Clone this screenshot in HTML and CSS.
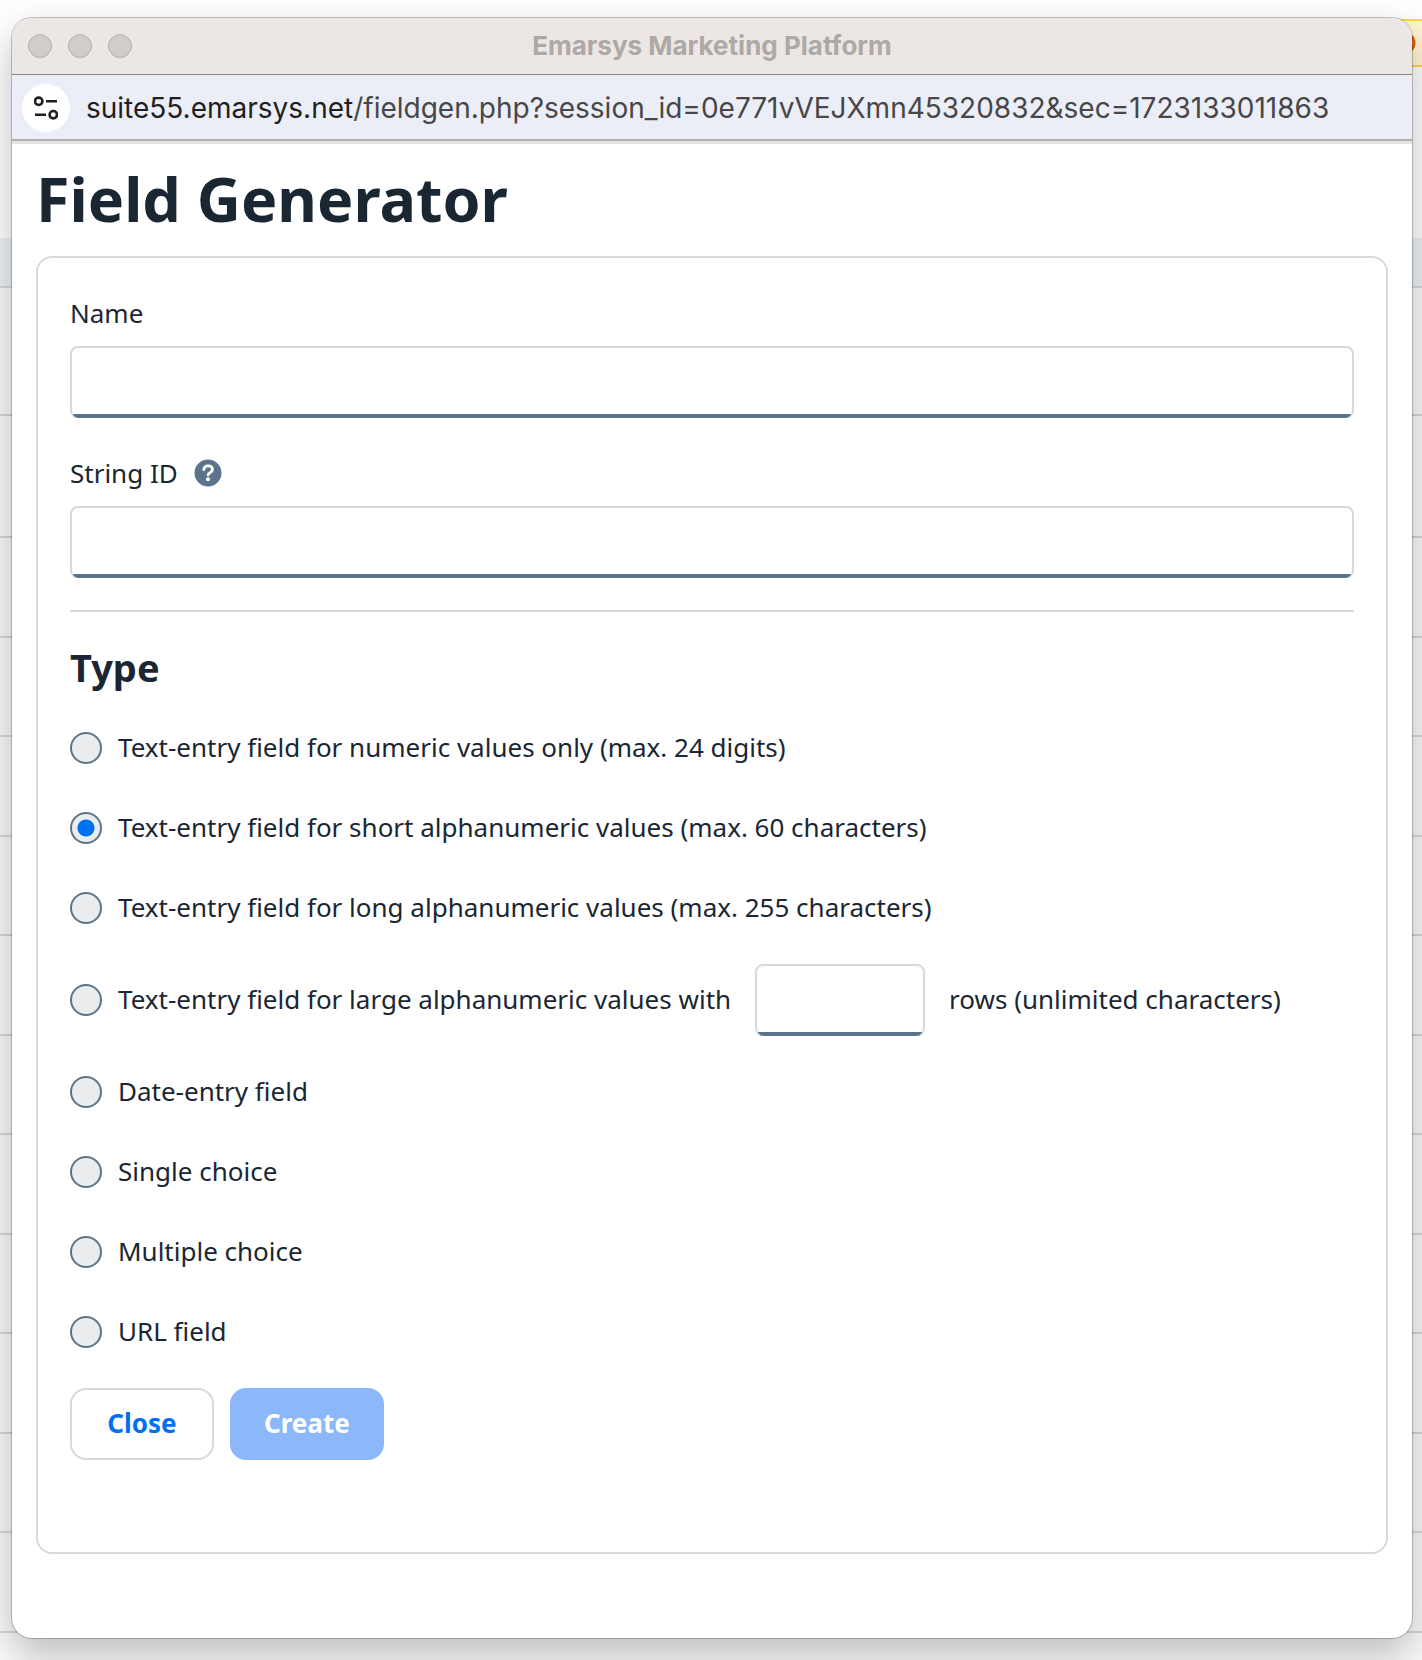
FILE: index.html
```html
<!DOCTYPE html>
<html lang="en">
<head>
<meta charset="utf-8">
<title>Emarsys Marketing Platform</title>
<link rel="stylesheet" href="styles.css">
</head>
<body>
<div class="desktop">
  <div class="opener" aria-hidden="true">
    <div class="opener-top"><div class="notice"><svg class="notice-icon" viewBox="0 0 24 24"><circle cx="12" cy="12" r="10" fill="none" stroke="#e06000" stroke-width="3"/></svg></div></div>
    <div class="opener-head"></div>
    <div class="opener-row first"></div>
    <div class="opener-row second"></div>
    <div class="opener-row"></div>
    <div class="opener-row"></div>
    <div class="opener-row"></div>
    <div class="opener-row"></div>
    <div class="opener-row"></div>
    <div class="opener-row"></div>
    <div class="opener-row"></div>
    <div class="opener-row"></div>
    <div class="opener-row"></div>
    <div class="opener-row"></div>
    <div class="opener-row"></div>
  </div>

  <div class="window">
    <header class="titlebar">
      <div class="lights"><span class="light"></span><span class="light"></span><span class="light"></span></div>
      <div class="window-title">Emarsys Marketing Platform</div>
    </header>
    <div class="urlbar">
      <button class="site-info" type="button" aria-label="View site information">
        <svg viewBox="0 0 24 24" width="24" height="24" fill="none" stroke="#1f1f1f" stroke-width="2.600"><circle cx="4.700" cy="5.300" r="3.700"/><path d="M12 5.300h11M1 18.700h11"/><circle cx="19.300" cy="18.700" r="3.700"/></svg>
      </button>
      <div class="url"><span class="host">suite55.emarsys.net</span>/fieldgen.php?session_id=0e771vVEJXmn45320832&amp;sec=1723133011863</div>
    </div>

    <main class="content">
      <h1 class="page-title">Field Generator</h1>
      <form class="card">
        <div class="field">
          <label class="label" for="name">Name</label>
          <input class="input" id="name" type="text">
        </div>
        <div class="field">
          <div class="label-row">
            <label class="label" for="string-id">String ID</label>
            <button class="help" type="button" aria-label="Help">
              <svg viewBox="0 0 28 28" width="28" height="28"><circle cx="14" cy="14" r="13.500" fill="#5b738b"/><path d="M9.800 10.600c.3-2.300 1.900-3.700 4.300-3.700 2.500 0 4.300 1.400 4.300 3.500 0 1.500-.8 2.300-2.100 3.100-1.400.8-2.200 1.300-2.200 2.500" fill="none" stroke="#fff" stroke-width="2.800" stroke-linecap="round"/><circle cx="14" cy="20.300" r="2" fill="#fff"/></svg>
            </button>
          </div>
          <input class="input" id="string-id" type="text">
        </div>
        <hr class="divider">
        <h2 class="section-title">Type</h2>
        <div class="options">
          <label class="option"><input class="radio" type="radio" name="type"><span class="option-text">Text-entry field for numeric values only (max. 24 digits)</span></label>
          <label class="option"><input class="radio" type="radio" name="type" checked><span class="option-text">Text-entry field for short alphanumeric values (max. 60 characters)</span></label>
          <label class="option"><input class="radio" type="radio" name="type"><span class="option-text">Text-entry field for long alphanumeric values (max. 255 characters)</span></label>
          <div class="option with-rows">
            <label class="option-main"><input class="radio" type="radio" name="type"><span class="option-text">Text-entry field for large alphanumeric values with</span></label>
            <input class="input rows" id="rows" type="text" aria-label="Number of rows">
            <label class="option-text" for="rows">rows (unlimited characters)</label>
          </div>
          <label class="option"><input class="radio" type="radio" name="type"><span class="option-text">Date-entry field</span></label>
          <label class="option"><input class="radio" type="radio" name="type"><span class="option-text">Single choice</span></label>
          <label class="option"><input class="radio" type="radio" name="type"><span class="option-text">Multiple choice</span></label>
          <label class="option"><input class="radio" type="radio" name="type"><span class="option-text">URL field</span></label>
        </div>
        <div class="actions">
          <button class="button secondary" type="button">Close</button>
          <button class="button primary" type="submit" disabled>Create</button>
        </div>
      </form>
    </main>
  </div>
</div>
</body>
</html>
```
FILE: styles.css
```css
* { box-sizing: border-box; }

body {
  margin: 0;
  background: #fff;
  color: #1a2733;
  font: 26px/30px "Noto Sans", sans-serif;
}

.desktop {
  display: grid;
  min-height: 100vh;
  overflow: hidden;
}

.opener, .window { grid-area: 1 / 1; min-width: 0; }

/* Page behind the popup window */
.opener { background: #fafafa; }
.opener-top { height: 238px; padding-top: 19px; background: #fff; }
.notice {
  display: flex;
  align-items: center;
  justify-content: flex-end;
  height: 48px;
  margin-left: 50%;
  padding-right: 6px;
  border: solid #ffd54a;
  border-width: 2px 0;
  background: #fff7d0;
}
.notice-icon { width: 24px; height: 24px; }
.opener-head { height: 50px; background: #eef2f6; border-bottom: 2px solid #d5dadd; }
.opener-row { height: 100px; border-bottom: 2px solid #d5dadd; }
.opener-row:nth-child(even) { height: 99px; }
.opener-row.first { height: 128px; }
.opener-row.second { height: 122px; }

/* Popup window */
.window {
  display: flex;
  flex-direction: column;
  margin: 18px 10px 22px 12px;
  border-radius: 20px;
  background: #fff;
  box-shadow: 0 0 0 1px rgba(0, 0, 0, .22), 0 16px 40px rgba(0, 0, 0, .26);
  overflow: hidden;
}

.titlebar {
  display: grid;
  grid-template-columns: 1fr auto 1fr;
  align-items: center;
  height: 57px;
  padding: 0 16px;
  border-bottom: 1px solid #8a8786;
  background: #ece7e4;
}
.lights { display: flex; gap: 16px; }
.light { width: 24px; height: 24px; border: 1px solid #b5b0ae; border-radius: 50%; background: #d2cdcb; }
.window-title { color: #aea9a6; font: 700 26px/32px Inter, sans-serif; }

.urlbar {
  display: flex;
  align-items: center;
  gap: 16px;
  height: 66px;
  padding: 2px 10px 0;
  border-bottom: 2px solid #b0b0b8;
  background: #ebeef7;
}
.site-info {
  display: grid;
  place-items: center;
  flex: none;
  width: 48px;
  height: 48px;
  padding: 0;
  border: 0;
  border-radius: 50%;
  background: #fff;
}
.url { color: #474747; font: 28px/32px Inter, sans-serif; white-space: nowrap; }
.host { color: #1f1f1f; }

.content { flex: 1; padding: 24px; border-top: 3px solid #e4e4e4; }
.page-title { margin: 0 0 26px; font-size: 61px; line-height: 62px; font-weight: 700; }

.card {
  min-height: 1298px;
  padding: 40px 32px;
  border: 2px solid #d5dadd;
  border-radius: 16px;
}
.field { margin-bottom: 40px; }
.label-row { display: flex; align-items: center; gap: 16px; }
.label { display: block; }
.help { display: flex; padding: 0; border: 0; background: none; }
.input {
  display: block;
  width: 100%;
  height: 72px;
  margin-top: 18px;
  padding: 0 16px;
  border: 2px solid #d5dadd;
  border-bottom: 0;
  border-radius: 8px;
  background: #fff linear-gradient(#5b738b, #5b738b) bottom / 100% 4px no-repeat;
  color: inherit;
  font: inherit;
}
.divider { margin: -8px 0 32px; border: 0; border-top: 2px solid #d5dadd; }
.section-title { margin: 0 0 42px; font-size: 38px; line-height: 46px; font-weight: 700; }

.options { display: flex; flex-direction: column; gap: 48px; }
.option, .option-main { display: flex; align-items: center; gap: 16px; white-space: nowrap; }
.option-text { padding-bottom: 2px; }
.with-rows { gap: 24px; margin: -8px 0; }
.rows { width: 170px; margin: 0; }
.radio {
  flex: none;
  width: 32px;
  height: 32px;
  margin: 0;
  appearance: none;
  border: 2px solid #5b738b;
  border-radius: 50%;
  background: #eaecee;
}
.radio:checked { background: radial-gradient(circle, #0070f2 8px, #eaecee 9px); }

.actions { display: flex; gap: 16px; margin-top: 40px; }
.button {
  min-width: 144px;
  height: 72px;
  padding: 0 32px 2px;
  border: 2px solid #d5dadd;
  border-radius: 16px;
  background: #fff;
  color: #0070f2;
  font: 700 26px/32px "Noto Sans", sans-serif;
}
.primary { border-color: #8cb7fb; background: #8cb7fb; color: #fff; }
```
